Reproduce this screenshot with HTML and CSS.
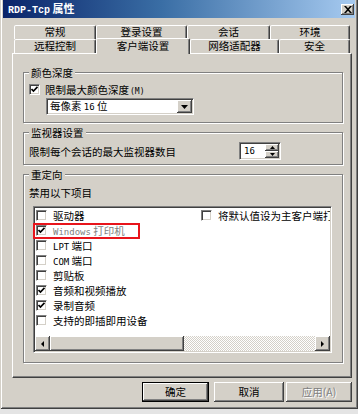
FILE: index.html
```html
<!DOCTYPE html>
<html lang="zh-CN">
<head>
<meta charset="utf-8">
<title>RDP-Tcp 属性</title>
<link rel="stylesheet" href="styles.css">
</head>
<body>
<div class="window">
  <div class="titlebar">
    <span class="title"><span class="title-en">RDP-Tcp</span> 属性</span>
    <span class="close"><svg width="8" height="7" viewBox="0 0 8 7"><path d="M0 0h2l2 2.3 2-2.3h2l-3 3.5 3 3.5h-2l-2-2.3-2 2.3h-2l3-3.5z" fill="#000"/></svg></span>
  </div>

  <div class="tabs">
    <div class="tabrow">
      <div class="tab t-a">常规</div>
      <div class="tab t-b">登录设置</div>
      <div class="tab t-c">会话</div>
      <div class="tab t-d">环境</div>
    </div>
    <div class="tabrow">
      <div class="tab t-e">远程控制</div>
      <div class="tab t-f selected">客户端设置</div>
      <div class="tab t-g">网络适配器</div>
      <div class="tab t-h">安全</div>
    </div>
  </div>

  <div class="panel">
    <fieldset class="group g1">
      <legend>颜色深度</legend>
      <div class="check-row">
        <span class="cb"><svg width="7" height="7" viewBox="0 0 7 7"><path d="M0.5 3l2 2 4-4.2" fill="none" stroke="#000" stroke-width="1.7"/></svg></span>
        <span>限制最大颜色深度<span class="mn">(M)</span></span>
      </div>
      <div class="select">
        <span class="select-text">每像素 <span class="en">16</span> 位</span>
        <span class="btn3d drop-btn"><svg width="7" height="4" viewBox="0 0 7 4"><path d="M0 0h7l-3.5 4z" fill="#000"/></svg></span>
      </div>
    </fieldset>

    <fieldset class="group g2">
      <legend>监视器设置</legend>
      <div class="monitor-row">
        <span class="monitor-text">限制每个会话的最大监视器数目</span>
        <span class="spin">
          <span class="spin-text en">16</span>
          <span class="spin-btns">
            <span class="btn3d spin-btn"><svg width="5" height="3" viewBox="0 0 5 3"><path d="M0 3h5l-2.5-3z" fill="#000"/></svg></span>
            <span class="btn3d spin-btn"><svg width="5" height="3" viewBox="0 0 5 3"><path d="M0 0h5l-2.5 3z" fill="#000"/></svg></span>
          </span>
        </span>
      </div>
    </fieldset>

    <fieldset class="group g3">
      <legend>重定向</legend>
      <div class="disable-label">禁用以下项目</div>
      <div class="listbox">
        <div class="list-items">
          <div class="col1">
            <div class="item"><span class="cb"></span><span>驱动器</span></div>
            <div class="item disabled"><span class="cb"><svg width="7" height="7" viewBox="0 0 7 7"><path d="M0.5 3l2 2 4-4.2" fill="none" stroke="#000" stroke-width="1.7"/></svg></span><span><span class="en">Windows</span> 打印机</span></div>
            <div class="item"><span class="cb"></span><span><span class="en">LPT</span> 端口</span></div>
            <div class="item"><span class="cb"></span><span><span class="en">COM</span> 端口</span></div>
            <div class="item"><span class="cb"></span><span>剪贴板</span></div>
            <div class="item"><span class="cb"><svg width="7" height="7" viewBox="0 0 7 7"><path d="M0.5 3l2 2 4-4.2" fill="none" stroke="#000" stroke-width="1.7"/></svg></span><span>音频和视频播放</span></div>
            <div class="item"><span class="cb"><svg width="7" height="7" viewBox="0 0 7 7"><path d="M0.5 3l2 2 4-4.2" fill="none" stroke="#000" stroke-width="1.7"/></svg></span><span>录制音频</span></div>
            <div class="item"><span class="cb"></span><span>支持的即插即用设备</span></div>
          </div>
          <div class="col2">
            <div class="item"><span class="cb"></span><span>将默认值设为主客户端打印机</span></div>
          </div>
        </div>
        <div class="hscroll">
          <span class="btn3d sb-btn"><svg width="3" height="6" viewBox="0 0 3 6"><path d="M3 0v6l-3-3z" fill="#000"/></svg></span>
          <span class="btn3d sb-thumb"></span>
          <span class="sb-track"></span>
          <span class="btn3d sb-btn"><svg width="3" height="6" viewBox="0 0 3 6"><path d="M0 0v6l3-3z" fill="#000"/></svg></span>
        </div>
        <div class="highlight"></div>
      </div>
    </fieldset>
  </div>

  <div class="buttons">
    <span class="button default b-ok">确定</span>
    <span class="button b-cancel">取消</span>
    <span class="button disabled b-apply">应用(<span class="ul">A</span>)</span>
  </div>
</div>
</body>
</html>
```

FILE: styles.css
```css
body {
  margin: 0;
  background: #e4e4e4;
  overflow: hidden;
  font-family: "Noto Sans CJK SC", "Liberation Sans", sans-serif;
  font-size: 10.5px;
  color: #000;
}

.en {
  font-family: "DejaVu Sans Mono", "Liberation Mono", monospace;
  font-size: 9px;
}

.mn {
  font-family: "DejaVu Sans Mono", monospace;
  font-size: 8px;
  margin-left: 1px;
}

.window {
  width: 358px;
  height: 409px;
  box-sizing: border-box;
  background: #d4d0c8;
  padding: 0 3px 3px 3px;
  display: flex;
  flex-direction: column;
  box-shadow: inset 1px 0 #d4d0c8, inset -1px -1px #404040, inset 2px 0 #fff, inset -2px -2px #808080;
}

.titlebar {
  height: 18px;
  flex: none;
  display: flex;
  align-items: center;
  justify-content: space-between;
  padding: 0 1px 0 5px;
  background: linear-gradient(to right, #0a246a 0%, #3a6ea5 45%, #a6caf0 100%);
}

.title {
  color: #fff;
  font-weight: bold;
  font-size: 11px;
  line-height: 18px;
}

.title-en {
  font-family: "Liberation Mono", monospace;
  font-size: 10px;
  font-weight: bold;
}

.close {
  width: 13px;
  height: 11px;
  display: flex;
  align-items: center;
  justify-content: center;
  background: #d4d0c8;
  box-shadow: inset -1px -1px #404040, inset 1px 1px #fff, inset -2px -2px #808080;
}

/* tabs */
.tabs {
  margin: 7px 0 0 9px;
  width: 340px;
  flex: none;
}

.tabrow {
  display: flex;
  padding-left: 2px;
  height: 14px;
}

.tab {
  box-sizing: border-box;
  height: 14px;
  flex: none;
  border: 1px solid;
  border-bottom: 0;
  border-color: #fff #404040 transparent #fff;
  box-shadow: inset -1px 0 #808080;
  border-radius: 2px 2px 0 0;
  text-align: center;
  line-height: 12px;
  background: #d4d0c8;
}

.tab.selected {
  height: 16px;
  margin-top: -1px;
  padding-top: 1px;
  z-index: 1;
}

.t-a { width: 82px; }
.t-b { width: 91px; }
.t-c { width: 83px; }
.t-d { width: 80px; }
.t-e { width: 82px; }
.t-f { width: 94px; }
.t-g { width: 89px; }
.t-h { width: 71px; }

/* panel */
.panel {
  margin-left: 9px;
  width: 340px;
  height: 325px;
  flex: none;
  box-sizing: border-box;
  border: 1px solid;
  border-color: #fff #404040 #404040 #fff;
  box-shadow: inset -1px -1px #808080;
  padding: 12px 8px 0 10px;
  display: flex;
  flex-direction: column;
}

.group {
  margin: 0;
  min-width: 0;
  padding: 0 5px;
  border: 1px solid #808080;
  box-shadow: inset 1px 1px #fff, 1px 1px #fff;
}

.group legend {
  padding: 0 2px;
  line-height: 13px;
  background: #d4d0c8;
}

.g1 { padding-bottom: 7px; }
.g2 { margin-top: 3px; padding-bottom: 4px; }
.g3 { margin-top: 3px; padding-bottom: 9px; }

.check-row {
  display: flex;
  align-items: center;
  height: 14px;
  margin-top: 3px;
}

.cb {
  width: 11px;
  height: 11px;
  flex: none;
  box-sizing: border-box;
  margin-right: 6px;
  background: #fff;
  border: 1px solid;
  border-color: #808080 #fff #fff #808080;
  box-shadow: inset 1px 1px #404040, inset -1px -1px #d4d0c8;
  display: flex;
  align-items: center;
  justify-content: center;
}

.check-row .cb { margin-right: 5px; }

.btn3d {
  box-sizing: border-box;
  background: #d4d0c8;
  box-shadow: inset -1px -1px #404040, inset 1px 1px #fff, inset -2px -2px #808080;
  display: flex;
  align-items: center;
  justify-content: center;
}

.select {
  margin: 2px 0 0 17px;
  width: 148px;
  height: 17px;
  box-sizing: border-box;
  background: #fff;
  border: 1px solid;
  border-color: #808080 #fff #fff #808080;
  box-shadow: inset 1px 1px #404040, inset -1px -1px #d4d0c8;
  display: flex;
  align-items: center;
  justify-content: space-between;
  padding: 1px;
}

.select-text {
  padding-left: 2px;
  line-height: 13px;
}

.drop-btn {
  width: 15px;
  height: 13px;
}

.monitor-row {
  display: flex;
  align-items: center;
  height: 18px;
  margin-top: 3px;
}

.monitor-text {
  width: 210px;
  flex: none;
}

.spin {
  width: 42px;
  height: 18px;
  box-sizing: border-box;
  background: #fff;
  border: 1px solid;
  border-color: #808080 #fff #fff #808080;
  box-shadow: inset 1px 1px #404040, inset -1px -1px #d4d0c8;
  padding: 1px;
  display: flex;
  justify-content: space-between;
}

.spin-text {
  padding-left: 3px;
  line-height: 14px;
}

.spin-btns {
  display: flex;
  flex-direction: column;
  width: 14px;
}

.spin-btn {
  height: 7px;
  flex: 1;
}

.disable-label {
  margin-top: 5px;
  line-height: 13px;
}

.listbox {
  position: relative;
  margin: 7px 0 0 4px;
  width: 299px;
  height: 147px;
  box-sizing: border-box;
  background: #fff;
  border: 1px solid;
  border-color: #808080 #fff #fff #808080;
  box-shadow: inset 1px 1px #404040, inset -1px -1px #d4d0c8;
  display: flex;
  flex-direction: column;
}

.list-items {
  flex: 1;
  display: flex;
  padding: 1px 1px 0 2px;
  overflow: hidden;
}

.col1 {
  width: 165px;
  flex: none;
}

.col2 {
  flex: 1;
  min-width: 0;
  overflow: hidden;
}

.item {
  display: flex;
  align-items: center;
  height: 15px;
  white-space: nowrap;
}

.item.disabled > span:last-child {
  color: #808080;
}

.hscroll {
  display: flex;
  height: 15px;
  margin: 0 1px 1px 1px;
  flex: none;
}

.sb-btn {
  width: 15px;
  flex: none;
}

.sb-thumb {
  width: 134px;
  flex: none;
}

.sb-track {
  flex: 1;
  background: repeating-conic-gradient(#fff 0 25%, #d4d0c8 0 50%) 0 0 / 2px 2px;
}

.highlight {
  position: absolute;
  left: -1px;
  top: 16px;
  width: 107px;
  height: 16px;
  box-sizing: border-box;
  border: 2px solid #e8141b;
}

/* buttons */
.buttons {
  display: flex;
  justify-content: flex-end;
  margin: 4px 3px 0 0;
  height: 20px;
  flex: none;
}

.button {
  box-sizing: border-box;
  height: 20px;
  line-height: 18px;
  text-align: center;
  background: #d4d0c8;
  box-shadow: inset -1px -1px #404040, inset 1px 1px #fff, inset -2px -2px #808080;
}

.button.default {
  border: 1px solid #000;
  line-height: 18px;
}

.b-ok { width: 67px; }
.b-cancel { width: 70px; margin-left: 5px; line-height: 20px; }
.b-apply { width: 66px; margin-left: 2px; line-height: 20px; }

.button.disabled {
  color: #808080;
  text-shadow: 1px 1px #fff;
}
```
